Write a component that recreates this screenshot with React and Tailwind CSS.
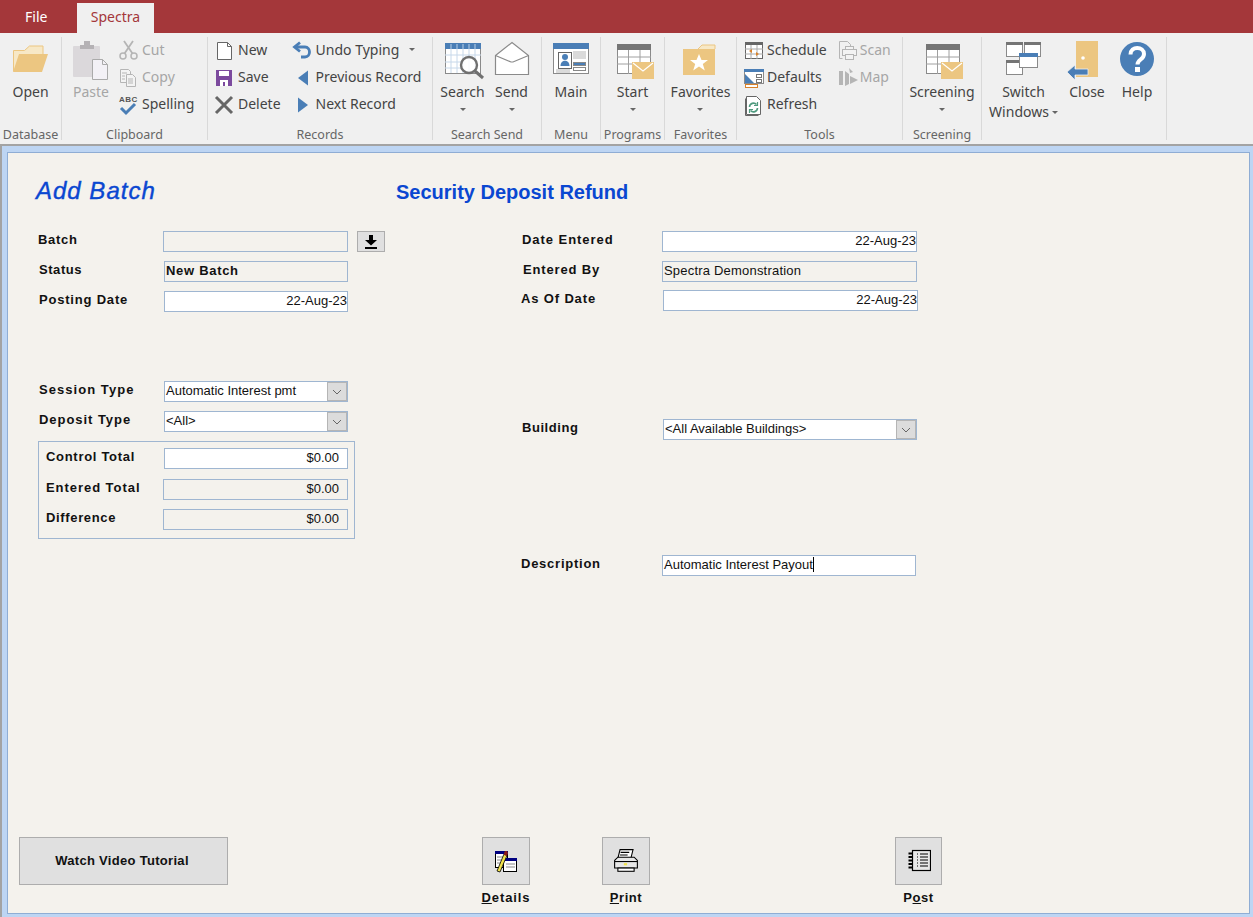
import React from "react";

const tan = "#ecc681";
const blue = "#4a7eb6";
const grey = "#8a8a8a";

const Big = ({ children }) => (
  <svg width="36" height="36" viewBox="0 0 36 36" className="overflow-visible">
    {children}
  </svg>
);

const Small = ({ children }) => (
  <svg width="20" height="20" viewBox="0 0 20 20" className="overflow-visible">
    {children}
  </svg>
);

const TableMail = () => (
  <Big>
    <rect x="2.5" y="3.5" width="33" height="29" fill="#fff" stroke={grey} />
    <rect x="2" y="3" width="34" height="6" fill="#757575" />
    <path d="M2 16h34M2 23h34M13.5 9v24M25 9v24" stroke="#a0a0a0" fill="none" />
    <rect x="17" y="21" width="22" height="17" fill={tan} />
    <path d="M18 22l10 8 10-8" stroke="#fff" strokeWidth="1.2" fill="none" />
  </Big>
);

const OpenIcon = () => (
  <Big>
    <path d="M0.5 30V9.5h11l5-4.5h13.5v9" fill="#f7e8c6" stroke={tan} />
    <path d="M0 31l6-18h29l-6 18z" fill={tan} />
  </Big>
);

const PasteIcon = () => (
  <Big>
    <rect x="0" y="5" width="27" height="31" rx="1" fill="#dbd8db" />
    <path d="M7 8V4h4V0h6v4h4v4z" fill="#b5b2b5" />
    <path d="M19.5 18.5h10l5 5v15h-15z" fill="#f3f1f6" stroke="#aaa" />
    <path d="M29.500 18.500v5h5" fill="none" stroke="#aaa" />
  </Big>
);

const SearchIcon = () => (
  <Big>
    <rect x="0.500" y="2.500" width="35" height="30" fill="#fff" stroke={grey} />
    <rect x="0" y="2" width="36" height="6" fill={blue} />
    <path d="M6 3v5M12 3v5M18 3v5M24 3v5M30 3v5" stroke="#b8d0e8" />
    <path d="M6 8v24M12 8v24M18 8v24M24 8v24M30 8v24M0 14h36M0 21h20M0 27h16" stroke="#c7d8ea" fill="none" />
    <circle cx="24" cy="24" r="8" fill="#fff" fillOpacity="0.85" stroke="#707070" strokeWidth="2.400" />
    <path d="M30 30l8 7" stroke="#707070" strokeWidth="3" />
  </Big>
);

const SendIcon = () => (
  <Big>
    <path d="M1.500 14.500L18 1.500l16.500 13V33.500h-33z" fill="#fff" stroke={grey} strokeWidth="1.200" />
    <path d="M1.500 14.500L17 21h2l15.500-6.500" fill="none" stroke={grey} strokeWidth="1.200" />
  </Big>
);

const MainIcon = () => (
  <Big>
    <rect x="0.500" y="2.500" width="35" height="30" fill="#fff" stroke={grey} />
    <rect x="0" y="2" width="36" height="6" fill={blue} />
    <rect x="5.500" y="11.500" width="13" height="16" fill="#fff" stroke="#666" />
    <circle cx="12" cy="16" r="3" fill={blue} />
    <path d="M7.500 25c0-7 9-7 9 0z" fill={blue} />
    <path d="M20 11h13M20 13h13M20 15h13M20 17h13M3 29h14M3 31h14" stroke="#b5b5b5" />
    <rect x="20.500" y="21.500" width="12" height="3" fill={blue} stroke="#888" />
    <rect x="20.500" y="26.500" width="12" height="3" fill="#fff" stroke="#888" />
  </Big>
);

const FavIcon = () => (
  <Big>
    <path d="M16 8l4-4h13v4" fill="#f7e8c6" stroke={tan} />
    <path d="M1 8h32v26H1z" fill={tan} />
    <path d="M17 13l2.500 6h6.500l-5.200 4 2 6.500-5.800-4-5.800 4 2-6.500-5.200-4h6.500z" fill="#fff" />
  </Big>
);

const SwitchIcon = () => (
  <Big>
    <rect x="0.500" y="1.500" width="16" height="14" fill="#fff" stroke={grey} />
    <rect x="0" y="1" width="17" height="3" fill="#757575" />
    <rect x="18.500" y="1.500" width="16" height="14" fill="#fff" stroke={grey} />
    <rect x="18" y="1" width="17" height="3" fill="#757575" />
    <rect x="0.500" y="19.500" width="16" height="14" fill="#fff" stroke={grey} />
    <rect x="0" y="19" width="17" height="3" fill="#757575" />
    <rect x="13.500" y="12.500" width="18" height="14" fill="#fff" stroke={grey} />
    <rect x="13" y="12" width="19" height="4" fill={blue} />
  </Big>
);

const CloseIcon = () => (
  <Big>
    <rect x="7" y="0" width="22" height="36" fill={tan} />
    <circle cx="14" cy="17" r="1.800" fill="#fff" />
    <path d="M-2 31l8-7v4h13v6H6v5z" fill={blue} stroke="#f0f0f0" strokeWidth="0.800" />
  </Big>
);

const HelpIcon = () => (
  <Big>
    <circle cx="18" cy="18" r="17" fill={blue} />
    <path d="M11.500 13.500c0-9 13.500-8.500 13.500-.5 0 5.500-6.500 5.500-6.500 10.500" fill="none" stroke="#fff" strokeWidth="4" />
    <rect x="16" y="26" width="5" height="5" fill="#fff" />
  </Big>
);

const CutIcon = () => (
  <Small>
    <circle cx="4" cy="15" r="3" fill="none" stroke="#b5b5b5" strokeWidth="1.500" />
    <circle cx="15" cy="15" r="3" fill="none" stroke="#b5b5b5" strokeWidth="1.500" />
    <path d="M5.500 12.500L14 0M13.500 12.500L5 0" stroke="#b5b5b5" strokeWidth="1.800" />
  </Small>
);

const CopyIcon = () => (
  <Small>
    <path d="M1.500 1.500h8l2 2v11h-10z" fill="#f3f3f3" stroke="#b5b5b5" />
    <path d="M7.500 6.500h6l3 3v9h-9z" fill="#f3f3f3" stroke="#b5b5b5" />
    <path d="M3 5h5M3 8h3M3 11h3M9 11h5M9 13h5M9 15h5" stroke="#b5b5b5" />
  </Small>
);

const SpellIcon = () => (
  <Small>
    <text x="0" y="7" fontSize="8" fontWeight="700" fill="#555" fontFamily="Liberation Sans, sans-serif" letterSpacing="0.5">ABC</text>
    <path d="M2 13l5 5 9-9" fill="none" stroke={blue} strokeWidth="3" />
  </Small>
);

const NewIcon = () => (
  <Small>
    <path d="M2.500 1.500h10l4 4v13h-14z" fill="#fff" stroke="#666" />
    <path d="M12.500 1.500v4h4" fill="none" stroke="#666" />
  </Small>
);

const SaveIcon = () => (
  <Small>
    <rect x="1" y="2" width="16" height="16" fill="#7c4a9e" />
    <rect x="4" y="3" width="10" height="5" fill="#fff" />
    <rect x="5" y="12" width="8" height="6" fill="#fff" />
    <rect x="8" y="14" width="2" height="4" fill="#7c4a9e" />
  </Small>
);

const DeleteIcon = () => (
  <Small>
    <path d="M1 2l16 16M17 2L1 18" stroke="#666" strokeWidth="3" />
  </Small>
);

const UndoIcon = () => (
  <Small>
    <path d="M3 6h9c6 0 6 10 0 10H8" fill="none" stroke={blue} strokeWidth="2.800" />
    <path d="M7 1.500L1.500 6 7 10.500" fill="none" stroke={blue} strokeWidth="2.800" />
  </Small>
);

const PrevIcon = () => (
  <Small>
    <path d="M15 2.500v15L5 10z" fill={blue} />
  </Small>
);

const NextIcon = () => (
  <Small>
    <path d="M5 2.500v15L15 10z" fill={blue} />
  </Small>
);

const ScheduleIcon = () => (
  <Small>
    <rect x="1.500" y="1.500" width="17" height="16" fill="#fff" stroke="#666" />
    <rect x="1" y="1" width="18" height="3" fill="#666" />
    <path d="M1 8h18M1 13h18M7 4v14M13 4v14" stroke="#aaa" />
    <path d="M8 8l-3 2 3 2zM12 11l3 2-3 2z" fill="#d9822b" />
  </Small>
);

const DefaultsIcon = () => (
  <Small>
    <rect x="0.500" y="1.500" width="19" height="14" fill="#fff" stroke={grey} />
    <rect x="0" y="1" width="20" height="3" fill={blue} />
    <path d="M1 15V6l9 9z" fill={blue} />
    <rect x="12.500" y="6.500" width="5" height="3" fill="#fff" stroke="#777" />
    <rect x="12.500" y="11.500" width="5" height="3" fill="#fff" stroke="#777" />
    <rect x="1.500" y="16.500" width="12" height="3" fill="#fff" stroke="#d9822b" />
  </Small>
);

const RefreshIcon = () => (
  <Small>
    <path d="M2.500 1.500h10l4 4v14h-14z" fill="#fff" stroke="#666" />
    <path d="M1.500 3.500v17h13" fill="none" stroke="#666" />
    <path d="M5.500 12a4 4 0 0 1 7-2.500M13.500 13a4 4 0 0 1-7 2.500" fill="none" stroke="#4f9a7e" strokeWidth="1.600" />
    <path d="M13.500 7v3.500H10M5.500 18v-3.500H9" fill="none" stroke="#4f9a7e" strokeWidth="1.200" />
  </Small>
);

const ScanIcon = () => (
  <Small>
    <path d="M1.500 0.500h8l3 3v4M1.500 0.500v17h3" fill="none" stroke="#b5b5b5" />
    <rect x="4.500" y="8.500" width="14" height="6" fill="#f3f3f3" stroke="#b5b5b5" />
    <rect x="7.500" y="5.500" width="8" height="3" fill="#f3f3f3" stroke="#b5b5b5" />
    <rect x="7.500" y="13.500" width="8" height="5" fill="#f3f3f3" stroke="#b5b5b5" />
  </Small>
);

const MapIcon = () => (
  <Small>
    <path d="M1 3h4v14H1zM7 3l4 3v10l-4 2z" fill="#b5b5b5" />
    <path d="M11 0l4 4-3 1zM12 8l8 4-8 4z" fill="#b5b5b5" />
  </Small>
);

const Caret = ({ className = "" }) => (
  <span className={`inline-block h-0 w-0 border-x-[3.500px] border-t-[3.500px] border-x-transparent border-t-[#666] ${className}`} />
);

const BigButton = ({ icon, label, caret, disabled, className = "" }) => (
  <div className={`flex flex-col items-center pt-[4px] ${className}`}>
    <div className="flex h-[36px] w-[36px] items-center justify-center">{icon}</div>
    <div className={`mt-[5px] h-[20px] text-[14px] leading-[20px] whitespace-nowrap ${disabled ? "text-[#a6a6a6]" : "text-[#444]"}`}>
      {label}
    </div>
    {caret && <Caret className="mt-[6px]" />}
  </div>
);

const SmallButton = ({ icon, label, disabled, gap = "gap-[3px]" }) => (
  <div className={`flex h-[27px] items-center ${gap}`}>
    <div className="flex h-[20px] w-[20px] items-center justify-center">{icon}</div>
    <span className={`pb-[2px] text-[14px] whitespace-nowrap ${disabled ? "text-[#a6a6a6]" : "text-[#444]"}`}>{label}</span>
  </div>
);

const Group = ({ label, width, children, className = "" }) => (
  <div className={`flex h-[103px] flex-col border-r border-[#d9d9d9] ${width}`}>
    <div className={`flex h-[91px] shrink-0 ${className}`}>{children}</div>
    <div className="h-[14px] text-center text-[12.500px] leading-[14px] whitespace-nowrap text-[#666]">{label}</div>
  </div>
);

const Ribbon = () => (
  <div className="flex h-[111px] bg-[#f0f0f0] pt-[4px] font-['Noto_Sans',sans-serif]">
    <Group label="Database" width="w-[62px]" className="justify-center">
      <BigButton icon={<OpenIcon />} label="Open" />
    </Group>
    <Group label="Clipboard" width="w-[146px]" className="pl-[7px]">
      <BigButton icon={<PasteIcon />} label="Paste" disabled className="w-[44px]" />
      <div className="ml-[6px]">
        <SmallButton icon={<CutIcon />} label="Cut" disabled />
        <SmallButton icon={<CopyIcon />} label="Copy" disabled />
        <SmallButton icon={<SpellIcon />} label="Spelling" />
      </div>
    </Group>
    <Group label="Records" width="w-[225px]" className="pl-[7px]">
      <div>
        <SmallButton icon={<NewIcon />} label="New" />
        <SmallButton icon={<SaveIcon />} label="Save" />
        <SmallButton icon={<DeleteIcon />} label="Delete" />
      </div>
      <div className="ml-[12px]">
        <div className="flex items-center">
          <SmallButton icon={<UndoIcon />} label="Undo Typing" />
          <Caret className="mb-[3px] ml-[10px]" />
        </div>
        <SmallButton icon={<PrevIcon />} label="Previous Record" />
        <SmallButton icon={<NextIcon />} label="Next Record" />
      </div>
    </Group>
    <Group label="Search Send" width="w-[109px]" className="pl-[5px]">
      <BigButton icon={<SearchIcon />} label="Search" caret className="w-[49px]" />
      <BigButton icon={<SendIcon />} label="Send" caret className="w-[49px]" />
    </Group>
    <Group label="Menu" width="w-[59px]" className="justify-center">
      <BigButton icon={<MainIcon />} label="Main" />
    </Group>
    <Group label="Programs" width="w-[64px]" className="justify-center">
      <BigButton icon={<TableMail />} label="Start" caret />
    </Group>
    <Group label="Favorites" width="w-[72px]" className="justify-center">
      <BigButton icon={<FavIcon />} label="Favorites" caret />
    </Group>
    <Group label="Tools" width="w-[166px]" className="pl-[7px]">
      <div>
        <SmallButton icon={<ScheduleIcon />} label="Schedule" />
        <SmallButton icon={<DefaultsIcon />} label="Defaults" />
        <SmallButton icon={<RefreshIcon />} label="Refresh" />
      </div>
      <div className="ml-[11px]">
        <SmallButton icon={<ScanIcon />} label="Scan" disabled gap="gap-[2px]" />
        <SmallButton icon={<MapIcon />} label="Map" disabled gap="gap-[2px]" />
      </div>
    </Group>
    <Group label="Screening" width="w-[79px]" className="justify-center">
      <BigButton icon={<TableMail />} label="Screening" caret />
    </Group>
    <Group label="" width="w-[185px]" className="pl-[5px]">
      <div className="flex w-[73px] flex-col items-center pt-[4px]">
        <SwitchIcon />
        <div className="mt-[5px] text-[14px] leading-[20px] text-[#444]">Switch</div>
        <div className="flex items-center text-[14px] leading-[20px] whitespace-nowrap text-[#444]">
          Windows
          <Caret className="ml-[3px]" />
        </div>
      </div>
      <BigButton icon={<CloseIcon />} label="Close" className="ml-[3px] w-[48px]" />
      <BigButton icon={<HelpIcon />} label="Help" className="w-[52px]" />
    </Group>
  </div>
);

const Box = ({ value, white, align = "left", className = "", bold, inset }) => (
  <div
    className={`flex h-[21px] items-center border border-[#9fb6d1] pb-[2px] text-[13px] text-[#111] ${white ? "bg-white" : "bg-[#f4f2ed]"} ${align === "right" ? "justify-end" : ""} ${inset ? "pr-[8px]" : "pl-[1px]"} ${bold ? "font-bold" : ""} ${className}`}
  >
    {value}
  </div>
);

const Combo = ({ value, className = "" }) => (
  <div className={`flex h-[21px] items-center border border-[#9fb6d1] bg-white text-[13px] text-[#111] ${className}`}>
    <span className="flex-1 pb-[2px] pl-[1px]">{value}</span>
    <span className="flex h-[19px] w-[20px] items-center justify-center border border-[#b5b5b5] bg-[#dcdcdc]">
      <svg width="10" height="6" viewBox="0 0 10 6">
        <path d="M1 1l4 4 4-4" fill="none" stroke="#666" />
      </svg>
    </span>
  </div>
);

const Row = ({ label, labelClass, children, className = "" }) => (
  <div className={`flex h-[21px] ${className}`}>
    <div className={`h-[16px] shrink-0 pt-[2px] text-[13px] leading-[14px] font-bold whitespace-nowrap text-[#111] ${labelClass}`}>
      {label}
    </div>
    {children}
  </div>
);

const ToolButton = ({ icon, label, className = "" }) => (
  <div className={`flex flex-col items-center ${className}`}>
    <div className="flex h-[48px] w-full items-center justify-center border border-[#adadad] bg-[#e0e0e0]">{icon}</div>
    <div className="mt-[5px] text-[13px] leading-[16px] font-bold whitespace-nowrap text-[#111]">{label}</div>
  </div>
);

const DetailsGlyph = () => (
  <svg width="24" height="24" viewBox="0 0 24 24">
    <rect x="1.500" y="2.500" width="12" height="16" fill="#fff" stroke="#000" />
    <rect x="1" y="2" width="13" height="3" fill="#000080" />
    <rect x="9.500" y="9.500" width="13" height="13" fill="#fff" stroke="#000" />
    <rect x="9" y="9" width="14" height="3" fill="#000080" />
    <path d="M3 8h8M3 11h5M3 14h5M12 15h9M12 18h9" stroke="#888" />
    <path d="M3 22L10 5l3 1.500L6 23z" fill="#f2e34c" stroke="#000" strokeWidth="0.800" />
    <path d="M10 4l1-2h2l1 2-1 3-3-1z" fill="#8a1a1a" />
  </svg>
);

const PrintGlyph = () => (
  <svg width="26" height="26" viewBox="0 0 24 24">
    <path d="M6.500 1.500h12l-2 8h-12z" fill="#fff" stroke="#000" />
    <path d="M7 4h8M6.500 6.500h7" stroke="#000" />
    <path d="M1.500 11.500l3-3h15l3 3v7h-21z" fill="#e8e8e8" stroke="#000" />
    <path d="M1.500 12.500h21" stroke="#000" />
    <rect x="4.500" y="18.500" width="15" height="3" fill="#fff" stroke="#000" />
    <rect x="10" y="14" width="3" height="2" fill="#f2e34c" />
  </svg>
);

const PostGlyph = () => (
  <svg width="24" height="24" viewBox="0 0 24 24">
    <rect x="5.500" y="1.500" width="18" height="20" fill="#e8e8e8" stroke="#000" strokeWidth="1.200" />
    <path d="M1.500 4.500h4M1.500 8h4M1.500 11.500h4M1.500 15h4M1.500 18.500h4" stroke="#000" strokeWidth="2" />
    <path d="M10 5h1M13 5h8M10 8h1M13 8h8M10 11h1M13 11h8M10 14h1M13 14h8M10 17h1M13 17h8" stroke="#000" />
  </svg>
);

const DownloadGlyph = () => (
  <svg width="14" height="14" viewBox="0 0 14 14">
    <path d="M5 0h4v5h4L7 10.500 1 5h4z" fill="#000" />
    <rect x="1" y="12" width="12" height="2" fill="#000" />
  </svg>
);

const App = () => (
  <div className="flex h-[917px] w-[1253px] flex-col overflow-hidden font-['Liberation_Sans',Arial,sans-serif]">
    <div className="flex h-[33px] items-end bg-[#a4373a] font-['Noto_Sans',sans-serif] text-[14px]">
      <div className="h-[30px] w-[77px] pl-[25px] leading-[28px] text-white">File</div>
      <div className="h-[30px] w-[77px] bg-[#f0f0f0] text-center leading-[28px] text-[#a4373a]">Spectra</div>
    </div>
    <Ribbon />

    <div className="flex min-h-0 flex-1 flex-col border-t-[2px] border-l-[2px] border-[#a3a3a3] bg-[#bdd5f3] pt-[6px] pr-[3px] pb-[3px] pl-[5px]">
      <div className="flex min-h-0 flex-1 flex-col border border-[#8fadd4] bg-[#f4f2ed]">
        <div className="flex flex-1 pl-[30px]">
          <div className="w-[358px]">
            <div className="h-[78px] pt-[24px] -ml-[2px] text-[24px] leading-[28px] tracking-[1px] text-[#0a47d1] italic [-webkit-text-stroke:0.4px_#0a47d1]">
              Add Batch
            </div>
            <div className="flex flex-col gap-[9px]">
              <Row label="Batch" labelClass="w-[125px] tracking-[0.7px]">
                <Box className="w-[185px]" />
                <div className="ml-[9px] flex h-[21px] w-[28px] items-center justify-center border border-[#adadad] bg-[#e0e0e0]">
                  <DownloadGlyph />
                </div>
              </Row>
              <Row label="Status" labelClass="w-[126px] pl-px tracking-[0.55px]">
                <Box value="New Batch" bold className="w-[184px] tracking-[0.7px]" />
              </Row>
              <Row label="Posting Date" labelClass="w-[126px] pl-px tracking-[0.8px]">
                <Box value="22-Aug-23" white align="right" className="w-[184px]" />
              </Row>
            </div>
            <div className="mt-[69px] flex flex-col gap-[9px]">
              <Row label="Session Type" labelClass="w-[126px] pl-px tracking-[1.05px]">
                <Combo value="Automatic Interest pmt" className="w-[184px]" />
              </Row>
              <Row label="Deposit Type" labelClass="w-[126px] pl-px tracking-[0.95px]">
                <Combo value="<All>" className="w-[184px]" />
              </Row>
            </div>
            <div className="mt-[9px] h-[98px] w-[317px] border border-[#9fb6d1] pt-[6px] pl-[7px]">
              <Row label="Control Total" labelClass="w-[118px] tracking-[0.7px]">
                <Box value="$0.00" white align="right" inset className="w-[184px]" />
              </Row>
              <Row label="Entered Total" labelClass="w-[117px] tracking-[0.95px]" className="mt-[10px]">
                <Box value="$0.00" align="right" inset className="w-[185px]" />
              </Row>
              <Row label="Difference" labelClass="w-[117px] tracking-[0.65px]" className="mt-[9px]">
                <Box value="$0.00" align="right" inset className="w-[185px]" />
              </Row>
            </div>
          </div>

          <div>
            <div className="h-[78px] pt-[25px] text-[20px] leading-[28px] font-bold whitespace-nowrap text-[#0a47d1]">
              Security Deposit Refund
            </div>
            <div className="ml-[125px]">
              <Row label="Date Entered" labelClass="w-[141px] pl-px tracking-[0.95px]">
                <Box value="22-Aug-23" white align="right" className="w-[255px]" />
              </Row>
              <Row label="Entered By" labelClass="w-[141px] pl-[2px] tracking-[0.85px]" className="mt-[9px]">
                <Box value="Spectra Demonstration" className="w-[255px] tracking-[0.2px]" />
              </Row>
              <Row label="As Of Date" labelClass="w-[142px] tracking-[0.85px]" className="mt-[8px]">
                <Box value="22-Aug-23" white align="right" className="w-[255px]" />
              </Row>
              <Row label="Building" labelClass="w-[142px] pl-px tracking-[0.55px]" className="mt-[108px]">
                <Combo value="<All Available Buildings>" className="w-[254px]" />
              </Row>
              <Row label="Description" labelClass="w-[141px] tracking-[0.75px]" className="mt-[115px]">
                <div className="flex h-[21px] w-[254px] items-center border border-[#9fb6d1] bg-white pb-[2px] pl-[1px] text-[13px] text-[#111]">
                  Automatic Interest Payout
                  <span className="h-[15px] w-px bg-black" />
                </div>
              </Row>
            </div>
          </div>
        </div>

        <div className="flex h-[76px] items-start pl-[11px]">
          <div className="flex h-[48px] w-[209px] items-center justify-center border border-[#adadad] bg-[#e0e0e0] pr-[3px] text-[13px] font-bold tracking-[0.3px] text-[#111]">
            Watch Video Tutorial
          </div>
          <ToolButton icon={<DetailsGlyph />} label={<span className="tracking-[0.9px]"><u>D</u>etails</span>} className="ml-[254px] w-[48px]" />
          <ToolButton icon={<PrintGlyph />} label={<span className="tracking-[0.55px]"><u>P</u>rint</span>} className="ml-[72px] w-[48px]" />
          <ToolButton icon={<PostGlyph />} label={<span className="tracking-[0.55px]">P<u>o</u>st</span>} className="ml-[245px] w-[47px]" />
        </div>
      </div>
    </div>
  </div>
);

export default App;
